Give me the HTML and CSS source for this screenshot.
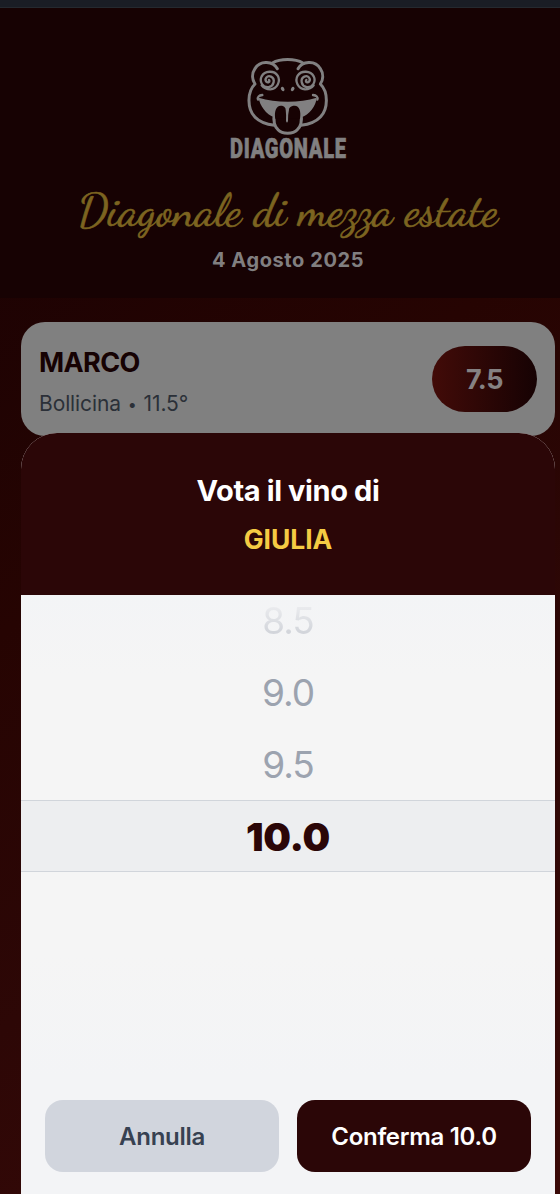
FILE: index.html
```html
<!DOCTYPE html>
<html lang="it">
<head>
<meta charset="utf-8">
<title>Diagonale di mezza estate</title>
<link rel="stylesheet" href="styles.css">
</head>
<body>
<div class="page">
  <div class="topbar"></div>
  <header class="header">
    <svg class="logo" width="136" height="116" viewBox="0 0 408 348" role="img" aria-label="Diagonale">
      <g fill="none" stroke="#818081" stroke-width="9" stroke-linecap="round" stroke-linejoin="round">
        <path d="M172 62C160 40 121 34 105 62C94 78 97 96 105 108C80 132 82 184 104 206C119 222 140 229 163 232"/>
        <path d="M234 62C246 40 285 34 301 62C312 78 309 96 301 108C326 132 324 184 302 206C287 222 266 229 243 232"/>
        <path d="M157 45C181 31 225 31 249 45"/>
        <path stroke-width="7" d="M147 96C151 101 144 106 139 101C132 92 142 81 153 86C167 93 162 114 147 117C128 120 117 101 125 85C134 68 162 66 173 83C183 100 171 123 151 124C139 124 131 120 125 112"/>
        <path stroke-width="7" d="M259 96C255 101 262 106 267 101C274 92 264 81 253 86C239 93 244 114 259 117C278 120 289 101 281 85C272 68 244 66 233 83C223 100 235 123 255 124C267 124 275 120 281 112"/>
        <path d="M114 155C111 147 117 142 127 141M292 155C295 147 289 142 279 141" stroke-width="7"/>
      </g>
      <path fill="#818081" d="M116 149C168 165 239 165 290 149C288 174 268 201 243 208H163C138 199 119 172 116 149Z"/>
      <path fill="#170203" stroke="#818081" stroke-width="9" d="M163 195C160 215 163 235 174 245C187 259 219 259 232 245C243 235 246 215 243 195Z"/>
      <path fill="#170203" d="M166 212C162 190 169 173 182 173C194 173 199 181 199 196V216Q201 228 204 214V196C204 180 212 173 224 173C238 173 244 190 240 212Z"/>
      <path fill="#818081" d="M197 184Q202 177 207 184Q204 198 204 219Q201 228 198 219Q199 200 197 184Z"/>
      <ellipse cx="188" cy="123" rx="5" ry="7" transform="rotate(-30 188 123)" fill="#818081"/>
      <ellipse cx="218" cy="123" rx="5" ry="7" transform="rotate(30 218 123)" fill="#818081"/>
      <text class="logo-word" x="30" y="329" textLength="350" lengthAdjust="spacingAndGlyphs">DIAGONALE</text>
    </svg>
    <svg class="title" width="440" height="60" viewBox="0 0 440 60">
      <text class="script" x="10" y="45" textLength="420" lengthAdjust="spacingAndGlyphs">Diagonale di mezza estate</text>
    </svg>
    <p class="date">4 Agosto 2025</p>
  </header>
  <main class="list">
    <article class="card">
      <div class="info">
        <h2 class="name">MARCO</h2>
        <p class="wine">Bollicina <span class="dot">•</span> 11.5°</p>
      </div>
      <div class="score">7.5</div>
    </article>
  </main>
  <section class="sheet">
    <div class="sheet-head">
      <h3 class="sheet-title">Vota il vino di</h3>
      <p class="sheet-name">GIULIA</p>
    </div>
    <div class="picker">
      <div class="option far">8.5</div>
      <div class="option">9.0</div>
      <div class="option">9.5</div>
      <div class="option selected">10.0</div>
    </div>
    <div class="actions">
      <button class="btn cancel">Annulla</button>
      <button class="btn confirm">Conferma 10.0</button>
    </div>
  </section>
</div>
</body>
</html>
```
FILE: styles.css
```css
* { box-sizing: border-box; margin: 0; padding: 0; }
body { font-family: Inter, "Liberation Sans", sans-serif; }
.page {
  position: relative;
  height: 1194px;
  overflow: hidden;
  background: linear-gradient(145deg, #1c0203 12%, #260402 40%, #2d0706 65%, #3a0a08 100%);
}
.topbar { height: 8px; background: #1a1d25; border-bottom: 1px solid #25292f; }
.header {
  height: 290px;
  background: #170203;
  display: flex;
  flex-direction: column;
  align-items: center;
  padding: 40px 0 0 16px;
}
.logo { flex: none; overflow: visible; }
.logo-word {
  font-family: Roboto, sans-serif;
  font-weight: 900;
  font-size: 85px;
  letter-spacing: 3px;
  fill: #818081;
  stroke: #818081;
  stroke-width: 2px;
}
.title { margin-top: 16px; flex: none; overflow: visible; }
.script {
  font-family: "Dancing Script", "Liberation Serif", cursive;
  font-size: 45px;
  fill: #7c6420;
  stroke: #7c6420;
  stroke-width: .6px;
}
.date {
  margin-top: 7px;
  color: #817f80;
  font-size: 20px;
  font-weight: 700;
  line-height: 26px;
  letter-spacing: .6px;
}
.list { padding: 24px 5px 0 21px; }
.card {
  height: 114px;
  border-radius: 24px;
  background: #808080;
  display: flex;
  justify-content: space-between;
  align-items: center;
  padding: 0 18px;
}
.info { padding-top: 4px; }
.name { color: #160203; font-size: 27px; font-weight: 700; line-height: 36px; letter-spacing: -.6px; }
.wine { color: #2b3038; font-size: 21px; line-height: 28px; margin-top: 9px; letter-spacing: -.1px; }
.dot { font-size: 16px; vertical-align: 1px; margin: 0 1px; line-height: 1; }
.score {
  width: 105px;
  height: 66px;
  border-radius: 33px;
  background: linear-gradient(90deg, #420b08, #160203);
  color: #858182;
  font-size: 27px;
  font-weight: 700;
  line-height: 68px;
  text-align: center;
  letter-spacing: -.5px;
}
.sheet {
  position: absolute;
  left: 21px;
  right: 5px;
  top: 433px;
  bottom: 0;
  border-radius: 36px 36px 0 0;
  overflow: hidden;
  background: #f3f4f6;
  display: flex;
  flex-direction: column;
}
.sheet-head {
  height: 162px;
  flex: none;
  background: #2b0607;
  text-align: center;
  padding-top: 37px;
}
.sheet-title { color: #fff; font-size: 29px; font-weight: 700; line-height: 42px; letter-spacing: -.4px; }
.sheet-name { color: #f5cb43; font-size: 26.5px; font-weight: 700; line-height: 38px; margin-top: 8px; letter-spacing: -.1px; }
.picker {
  height: 482px;
  flex: none;
  overflow: hidden;
  padding-top: 1px;
  background: linear-gradient(#f3f4f6, #f5f5f5 80px, #f5f5f5 360px, #f3f4f6);
}
.option {
  height: 72px;
  line-height: 73px;
  text-align: center;
  color: #9ca3af;
  font-size: 37px;
  letter-spacing: -1px;
}
.option:first-child { height: 60px; line-height: 49px; }
.far {
  color: transparent;
  background: linear-gradient(#e9eaed 12px, #cfd2d8 40px) text;
  -webkit-background-clip: text;
}
.selected {
  line-height: 71px;
  color: #2b0607;
  font-size: 39px;
  font-weight: 900;
  letter-spacing: -.3px;
  background: #edeef0;
  border: solid #d1d5db;
  border-width: 1px 0;
}
.actions { display: flex; gap: 18px; padding: 23px 24px 0; }
.btn {
  flex: 1;
  height: 72px;
  border: 0;
  border-radius: 18px;
  font-family: inherit;
  font-size: 24px;
  font-weight: 600;
  letter-spacing: -.3px;
}
.cancel { background: #d1d5dd; color: #374151; }
.confirm { background: #2b0607; color: #fff; }
```
